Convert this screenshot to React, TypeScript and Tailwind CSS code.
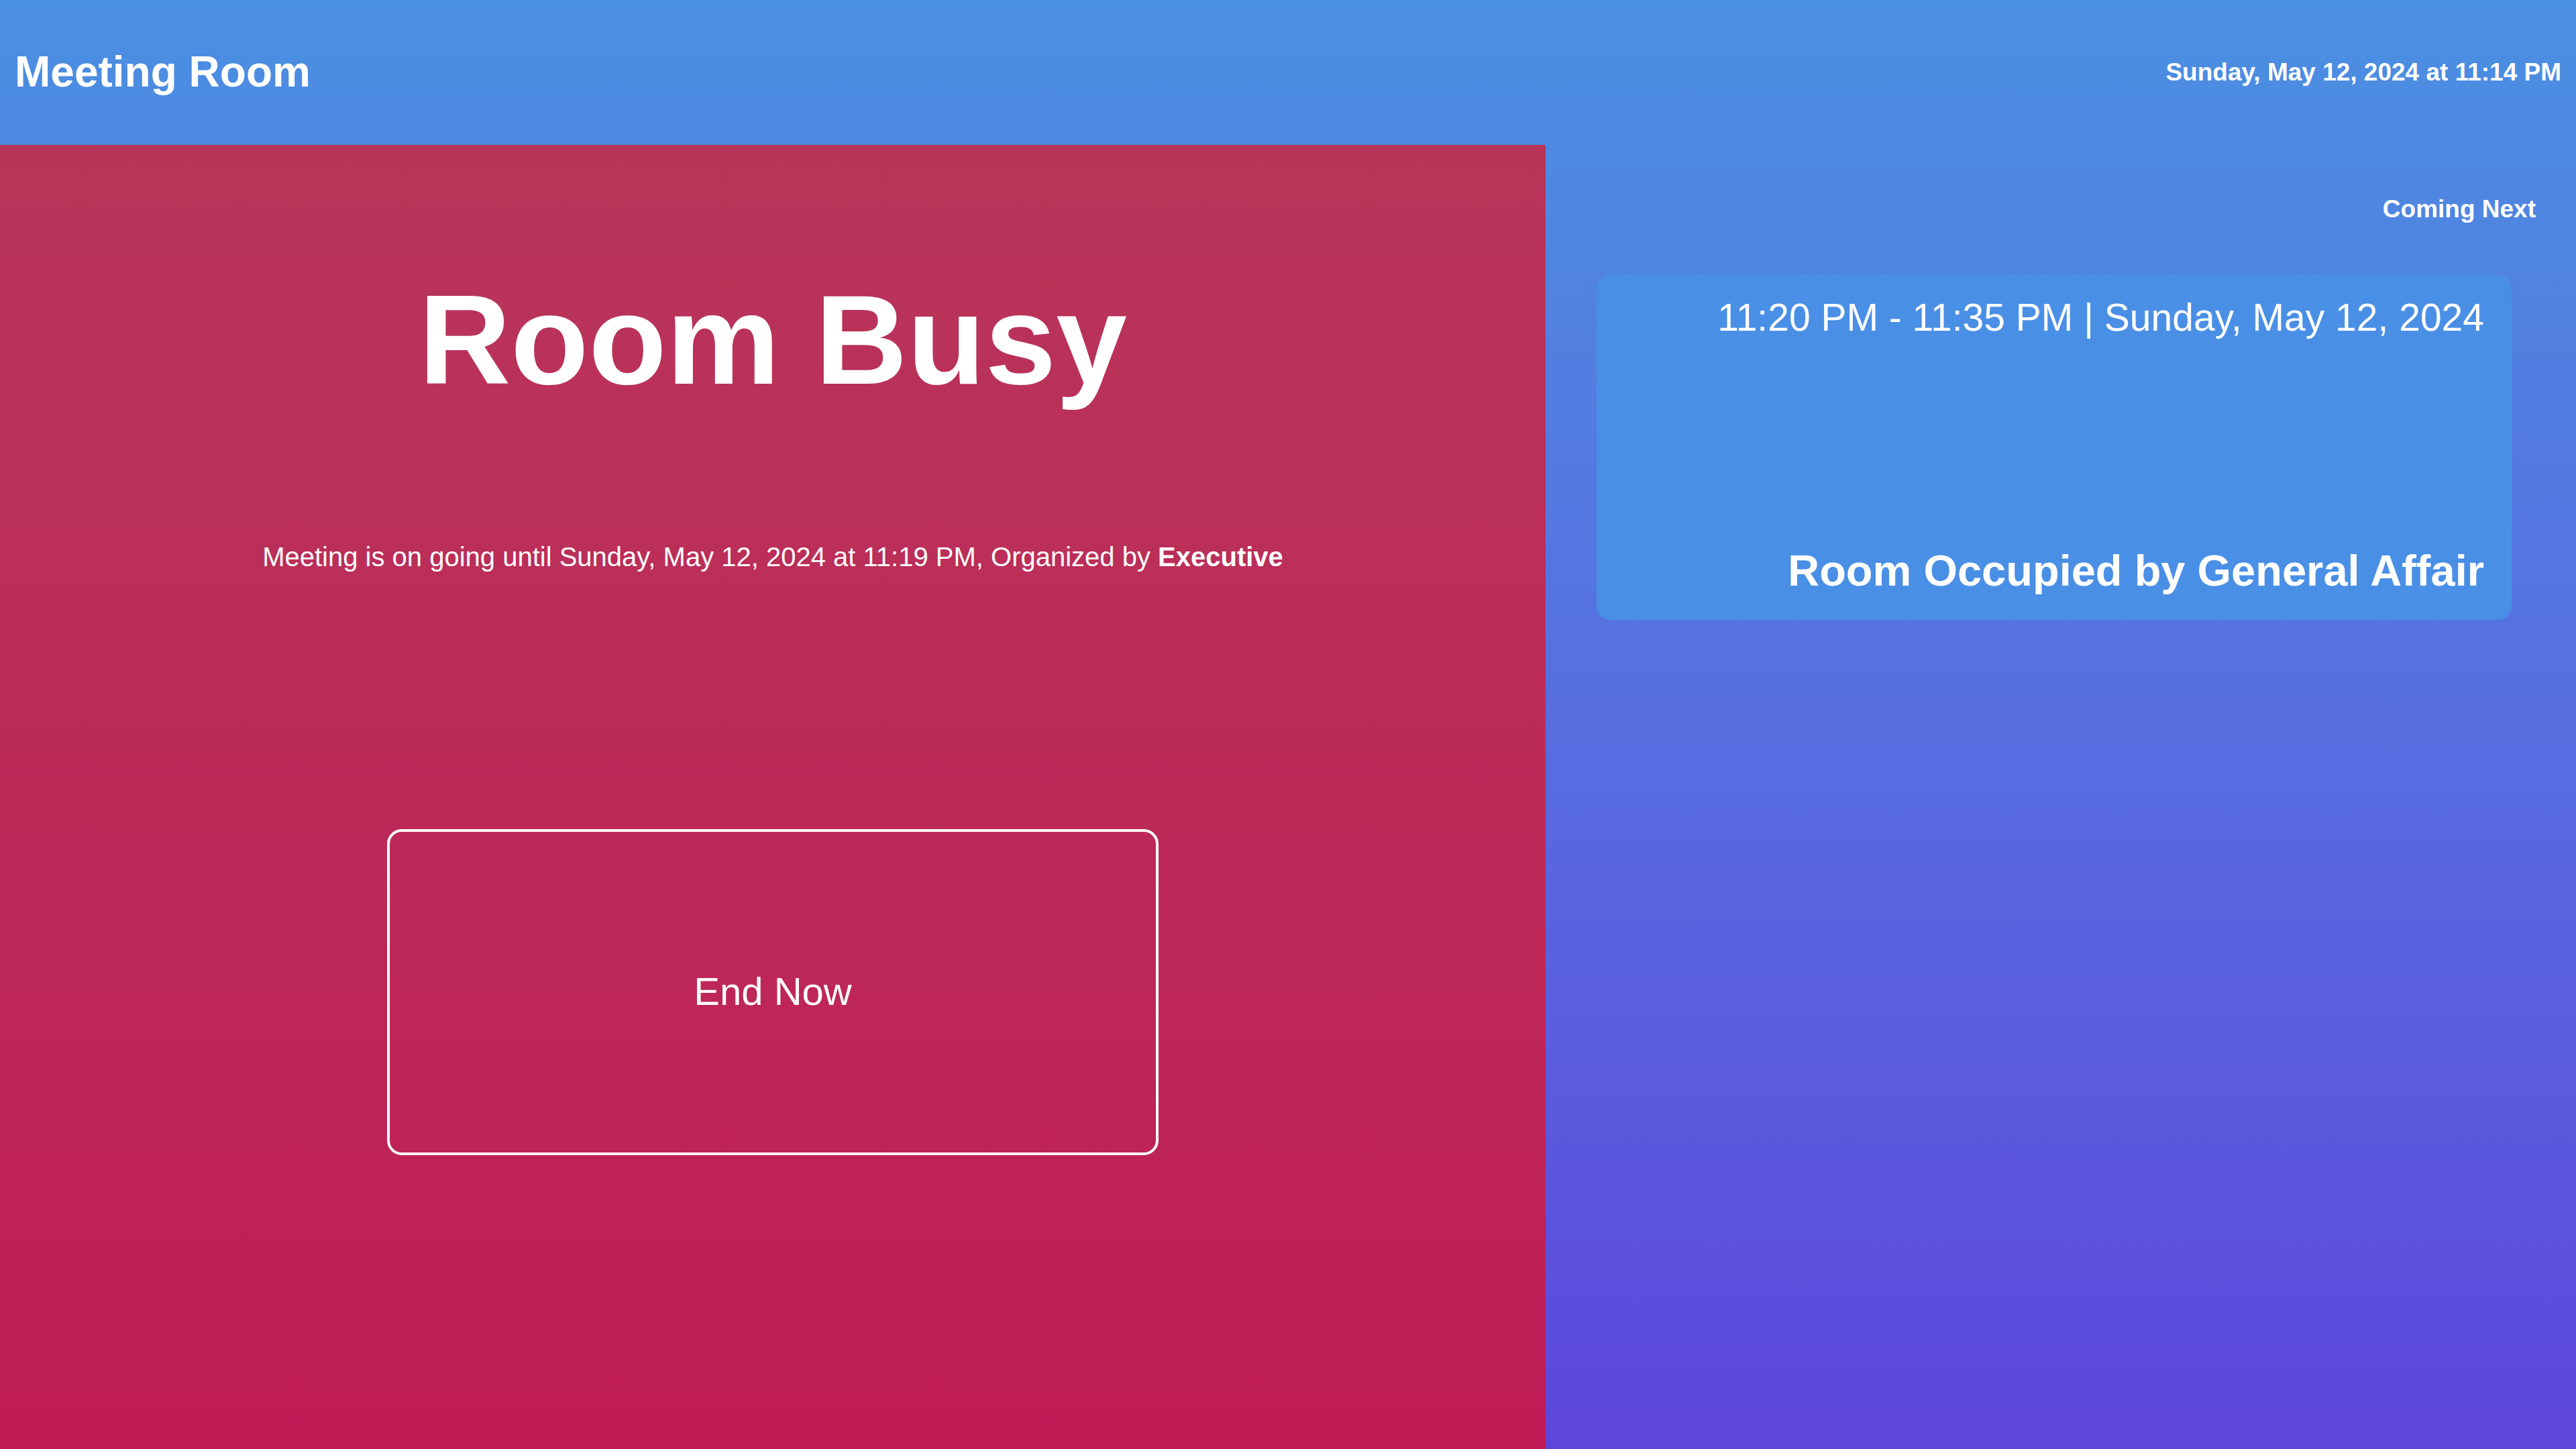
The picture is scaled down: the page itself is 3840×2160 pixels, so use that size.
export default function App() {
  const font = { fontFamily: '"Liberation Sans", Arial, sans-serif' };

  return (
    <div
      className="w-full h-[2160px] flex flex-col bg-linear-to-b from-[#4a90e2] to-[#5d45dc] text-white leading-[1.15] overflow-hidden"
      style={font}
    >
      {/* header */}
      <header className="h-[216px] shrink-0 flex items-center justify-between pl-[22px] pr-[22px]">
        <h1 className="text-[64px] font-bold">Meeting Room</h1>
        <div className="text-[37px] font-bold">Sunday, May 12, 2024 at 11:14 PM</div>
      </header>

      <main className="flex-1 flex">
        {/* current status */}
        <section className="w-[2304px] shrink-0 flex flex-col items-center bg-linear-to-b from-[#b8355a] to-[#c01c56]">
          <h2 className="mt-[181px] text-[190px] font-bold">Room Busy</h2>
          <p className="mt-[191px] text-[40px]">
            Meeting is on going until Sunday, May 12, 2024 at 11:19 PM, Organized by{" "}
            <span className="font-bold">Executive</span>
          </p>
          <button className="mt-[383px] w-[1150px] h-[486px] flex items-center justify-center border-4 border-white rounded-[22px] text-[58px] text-white">
            End Now
          </button>
        </section>

        {/* upcoming */}
        <section className="flex-1 flex flex-col">
          <div className="pt-[75px] pr-[60px] text-right text-[37px] font-bold">Coming Next</div>
          <div className="mt-[76px] ml-[76px] mr-[96px] h-[514px] rounded-[20px] bg-[#4a8fe6] flex flex-col justify-between items-end pr-[41px] pt-[31px] pb-[35px] text-right">
            <div className="text-[57px]">11:20 PM - 11:35 PM | Sunday, May 12, 2024</div>
            <div className="text-[65px] font-bold">Room Occupied by General Affair</div>
          </div>
        </section>
      </main>
    </div>
  );
}
